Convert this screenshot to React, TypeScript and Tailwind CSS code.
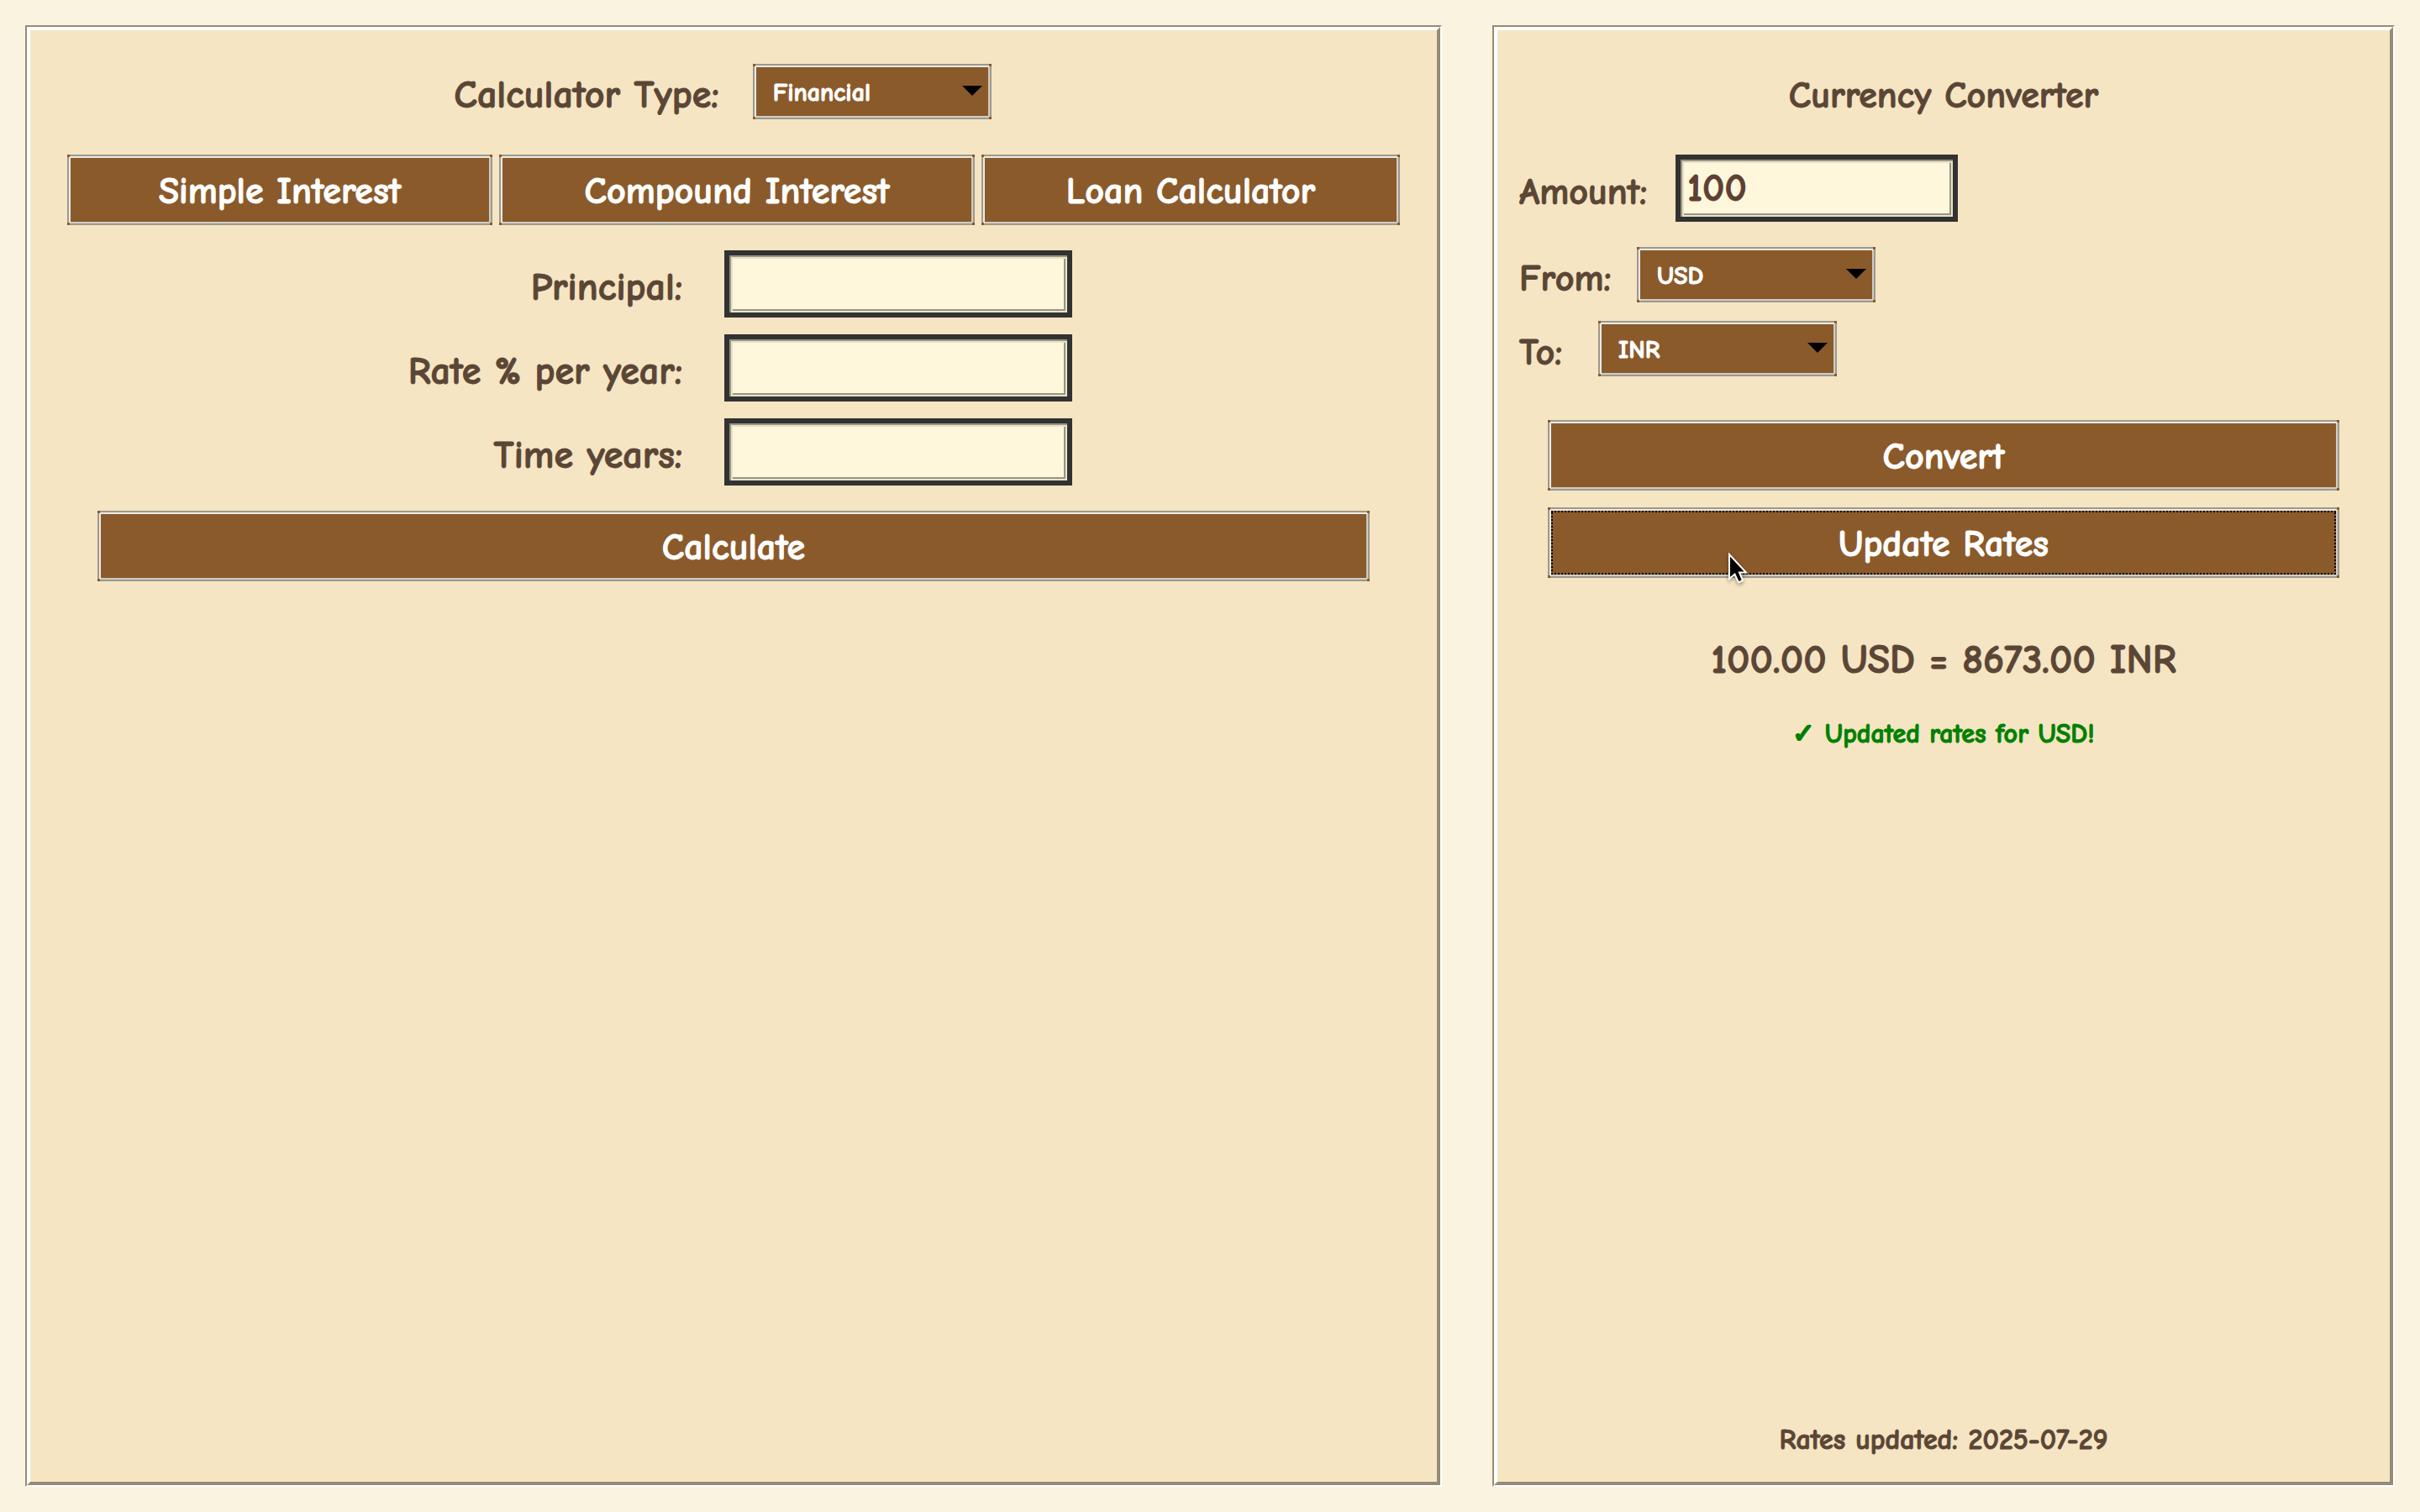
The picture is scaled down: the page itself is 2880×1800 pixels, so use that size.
import type { ReactNode } from "react";

const converterCurrencies = ["USD", "INR", "EUR", "GBP", "JPY"];
const calculatorTypes = ["Financial", "Standard", "Scientific"];

function Corners() {
  return (
    <>
      <span aria-hidden="true" className="absolute -left-0.5 -top-0.5 size-[3px] bg-[#8b5a2b]" />
      <span aria-hidden="true" className="absolute -right-0.5 -top-0.5 size-[3px] bg-[#8b5a2b]" />
      <span aria-hidden="true" className="absolute -bottom-0.5 -left-0.5 size-[3px] bg-[#8b5a2b]" />
      <span aria-hidden="true" className="absolute -bottom-0.5 -right-0.5 size-[3px] bg-[#8b5a2b]" />
    </>
  );
}

function BevelButton({ children, focused = false }: { children: ReactNode; focused?: boolean }) {
  return (
    <button
      type="button"
      className="relative flex h-[84px] w-full items-center justify-center border-2 border-[#9e988c] bg-[#8b5a2b] pt-1 text-[44px] leading-[60px] font-bold text-white shadow-[inset_2px_2px_0_#ecebe6,inset_-2px_-2px_0_#cfcdc4]"
    >
      <Corners />
      {focused && (
        <span
          aria-hidden="true"
          className="absolute inset-0.5 bg-[repeating-linear-gradient(90deg,#000_0_2px,transparent_2px_4px),repeating-linear-gradient(90deg,#000_0_2px,transparent_2px_4px),repeating-linear-gradient(0deg,#000_0_2px,transparent_2px_4px),repeating-linear-gradient(0deg,#000_0_2px,transparent_2px_4px)] bg-[length:100%_2px,100%_2px,2px_100%,2px_100%] bg-[position:0_0,0_100%,0_0,100%_0] bg-no-repeat"
        />
      )}
      <span>{children}</span>
    </button>
  );
}

function BevelSelect({ id, value, options }: { id: string; value: string; options: string[] }) {
  return (
    <div className="relative h-[66px] w-[284px] shrink-0 border-2 border-[#9e988c] bg-[#8b5a2b] shadow-[inset_2px_2px_0_#ecebe6,inset_-2px_-2px_0_#cfcdc4]">
      <Corners />
      <select
        id={id}
        defaultValue={value}
        className="block h-full w-full appearance-none bg-transparent pt-1 pr-12 pl-[22px] text-[30px] leading-[48px] font-bold text-white"
      >
        {options.map((option) => (
          <option key={option}>{option}</option>
        ))}
      </select>
      <svg
        aria-hidden="true"
        viewBox="0 0 24 12"
        className="pointer-events-none absolute top-6 right-[9px] h-3 w-6"
      >
        <path d="M0 0H24L12 12Z" fill="#000" />
      </svg>
    </div>
  );
}

function Label({ htmlFor, className, children }: { htmlFor: string; className: string; children: ReactNode }) {
  return (
    <label htmlFor={htmlFor} className={`shrink-0 pt-2.5 leading-[50px] whitespace-nowrap ${className}`}>
      {children}
    </label>
  );
}

function Field({ id, value, className }: { id: string; value?: string; className: string }) {
  return (
    <input
      id={id}
      type="text"
      defaultValue={value}
      className={`h-20 border-6 border-[#323232] bg-[#fff7db] px-2 text-[46px] leading-[60px] font-bold text-[#5c4033] shadow-[inset_2px_2px_0_#999484,inset_-2px_-2px_0_#e6e6c8,inset_4px_4px_0_#e8e0c6,inset_-4px_-4px_0_#999484] outline-none ${className}`}
    />
  );
}

function Panel({ children }: { children: ReactNode }) {
  return (
    <section className="flex border-2 border-t-[#958b76] border-r-white border-b-white border-l-[#958b76]">
      <div className="flex flex-1 flex-col border-4 border-t-white border-r-[#958b76] border-b-[#958b76] border-l-white bg-[#f5e5c3] pt-10 pb-7">
        {children}
      </div>
    </section>
  );
}

const interestFields = [
  { id: "principal", label: "Principal:" },
  { id: "rate", label: "Rate % per year:" },
  { id: "time", label: "Time years:" },
];

export default function App() {
  return (
    <main className="grid min-h-screen grid-cols-[281fr_179fr] gap-15 bg-[#faf3e0] p-[30px] font-['Comic_Neue','Comic_Sans_MS','Lato',sans-serif] font-bold text-[#5b4636] [-webkit-text-stroke:1px_currentColor]">
      <Panel>
        <div className="flex items-center justify-center gap-10 pr-[26px]">
          <Label htmlFor="type" className="text-[46px]">
            Calculator Type:
          </Label>
          <BevelSelect id="type" value="Financial" options={calculatorTypes} />
        </div>

        <div className="mt-[42px] grid grid-cols-[253fr_283fr_249fr] gap-2 px-11">
          <BevelButton>Simple Interest</BevelButton>
          <BevelButton>Compound Interest</BevelButton>
          <BevelButton>Loan Calculator</BevelButton>
        </div>

        <div className="mt-[30px] grid grid-cols-[auto_auto] items-center justify-center gap-x-[50px] gap-y-5 pl-4">
          {interestFields.map((field) => (
            <div key={field.id} className="contents">
              <Label htmlFor={field.id} className="text-right text-[46px]">
                {field.label}
              </Label>
              <Field id={field.id} className="w-[414px]" />
            </div>
          ))}
        </div>

        <div className="mt-[30px] px-20">
          <BevelButton>Calculate</BevelButton>
        </div>
      </Panel>

      <Panel>
        <h1 className="pt-2.5 text-center text-[44px] leading-[56px]">Currency Converter</h1>

        <div className="mt-[42px] flex items-center gap-8 pl-[26px]">
          <Label htmlFor="amount" className="w-[154px] text-[44px]">
            Amount:
          </Label>
          <Field id="amount" value="100" className="w-[336px]" />
        </div>
        <div className="mt-[30px] flex items-center gap-8 pl-[26px]">
          <Label htmlFor="from" className="w-[108px] text-[44px]">
            From:
          </Label>
          <BevelSelect id="from" value="USD" options={converterCurrencies} />
        </div>
        <div className="mt-[22px] flex items-center gap-8 pl-[26px]">
          <Label htmlFor="to" className="w-[62px] text-[44px]">
            To:
          </Label>
          <BevelSelect id="to" value="INR" options={converterCurrencies} />
        </div>

        <div className="mt-[52px] flex flex-col gap-5 px-15">
          <BevelButton>Convert</BevelButton>
          <div className="relative">
            <BevelButton focused>Update Rates</BevelButton>
            <svg
              aria-hidden="true"
              viewBox="0 0 24 40"
              className="pointer-events-none absolute top-[54px] left-[214px] h-10 w-6 drop-shadow-[0_2px_2px_rgba(0,0,0,0.4)]"
            >
              <path
                d="M2 2V31L8.500 25.500L13 35.500L18 33L14 23.500H22Z"
                fill="#000"
                stroke="#fff"
                strokeWidth="2"
              />
            </svg>
          </div>
        </div>

        <output className="mt-[68px] block text-center text-[48px] leading-[60px]">
          100.00 USD = 8673.00 INR
        </output>
        <p className="mt-9 text-center text-[32px] leading-[44px] text-[#008000]">
          ✓ Updated rates for USD!
        </p>
        <p className="mt-auto text-center text-[34px] leading-[44px]">Rates updated: 2025-07-29</p>
      </Panel>
    </main>
  );
}
